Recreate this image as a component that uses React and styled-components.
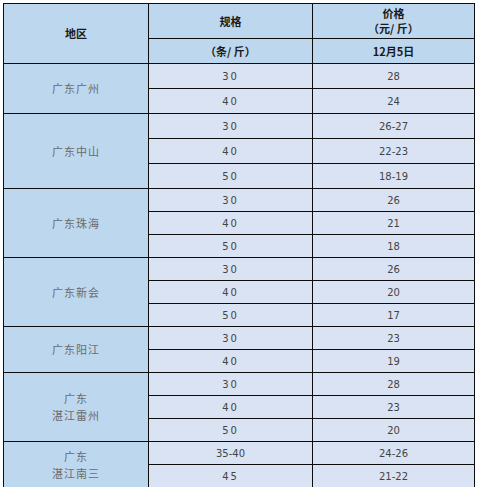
import React from 'react';
import styled, { createGlobalStyle } from 'styled-components';

const GlobalStyle = createGlobalStyle`
  body {
    margin: 0;
    background: #ffffff;
    font-family: "Noto Sans CJK SC", "Liberation Sans", sans-serif;
  }
`;

const regions = [
  { name: ['广东广州'], rows: [['30', '28'], ['40', '24']], h: 25 },
  { name: ['广东中山'], rows: [['30', '26-27'], ['40', '22-23'], ['50', '18-19']], h: 25 },
  { name: ['广东珠海'], rows: [['30', '26'], ['40', '21'], ['50', '18']], h: 23 },
  { name: ['广东新会'], rows: [['30', '26'], ['40', '20'], ['50', '17']], h: 23 },
  { name: ['广东阳江'], rows: [['30', '23'], ['40', '19']], h: 23 },
  { name: ['广东', '湛江雷州'], rows: [['30', '28'], ['40', '23'], ['50', '20']], h: 23 },
  { name: ['广东', '湛江南三'], rows: [['35-40', '24-26'], ['45', '21-22']], h: 23 },
];

const Page = styled.div`
  padding: 3px 0 0 3px;
`;

const Table = styled.table`
  border-collapse: collapse;
  table-layout: fixed;
  width: 471px;
`;

const Row = styled.tr`
  height: ${(p) => p.$h}px;
`;

const HeadCell = styled.th`
  border: 1px solid #0d0d0d;
  background: #bdd7ee;
  color: #1a1a1a;
  font-size: 11px;
  font-weight: bold;
  line-height: 15px;
  padding: 0;
  text-align: center;
  vertical-align: middle;
`;

const RegionCell = styled.td`
  border: 1px solid #0d0d0d;
  background: #bdd7ee;
  color: #6b6b6b;
  font-size: 11px;
  line-height: 17px;
  letter-spacing: 1px;
  padding: 0;
  text-align: center;
`;

const DataCell = styled.td`
  border: 1px solid #0d0d0d;
  background: #dae3f3;
  color: #444444;
  font-family: "DejaVu Sans", sans-serif;
  font-size: 10px;
  letter-spacing: ${(p) => (p.$wide ? '2px' : '0')};
  padding: 0;
  text-align: center;
`;

export default function App() {
  return (
    <Page>
      <GlobalStyle />
      <Table>
        <colgroup>
          <col style={{ width: 145 }} />
          <col style={{ width: 164 }} />
          <col style={{ width: 162 }} />
        </colgroup>
        <thead>
          <Row $h={35}>
            <HeadCell rowSpan={2}>地区</HeadCell>
            <HeadCell>规格</HeadCell>
            <HeadCell>
              价格
              <br />
              （元/ 斤）
            </HeadCell>
          </Row>
          <Row $h={25}>
            <HeadCell>（条/ 斤）</HeadCell>
            <HeadCell>12月5日</HeadCell>
          </Row>
        </thead>
        <tbody>
          {regions.map((r) =>
            r.rows.map((row, i) => (
              <Row key={r.name.join('') + i} $h={r.h}>
                {i === 0 && (
                  <RegionCell rowSpan={r.rows.length}>
                    {r.name.map((n, k) => (
                      <div key={k}>{n}</div>
                    ))}
                  </RegionCell>
                )}
                <DataCell $wide={row[0].length <= 2}>{row[0]}</DataCell>
                <DataCell>{row[1]}</DataCell>
              </Row>
            ))
          )}
        </tbody>
      </Table>
    </Page>
  );
}
